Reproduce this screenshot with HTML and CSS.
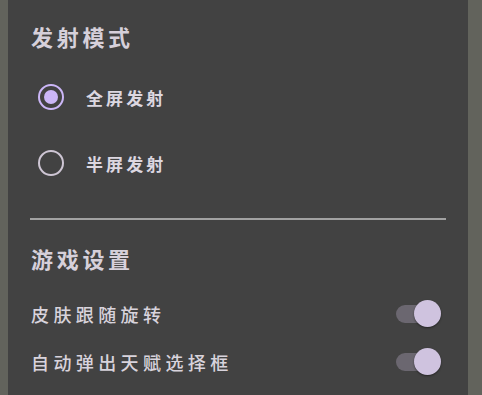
FILE: index.html
```html
<!DOCTYPE html>
<html lang="zh-CN">
<head>
<meta charset="utf-8">
<title>设置</title>
<link rel="stylesheet" href="styles.css">
</head>
<body>
<div class="screen">
  <div class="edge edge-left"></div>
  <div class="panel">
    <div class="section-title">发射模式</div>
    <div class="radio-row">
      <span class="radio radio-on"><span class="radio-dot"></span></span>
      <span class="radio-label">全屏发射</span>
    </div>
    <div class="radio-row">
      <span class="radio"></span>
      <span class="radio-label">半屏发射</span>
    </div>
    <div class="divider"></div>
    <div class="section-title section-title-2">游戏设置</div>
    <div class="switch-row switch-row-first">
      <span class="switch-label">皮肤跟随旋转</span>
      <span class="switch"><span class="track"></span><span class="thumb"></span></span>
    </div>
    <div class="switch-row">
      <span class="switch-label">自动弹出天赋选择框</span>
      <span class="switch"><span class="track"></span><span class="thumb"></span></span>
    </div>
  </div>
  <div class="edge edge-right"></div>
</div>
</body>
</html>
```
FILE: styles.css
```css
html, body {
  margin: 0;
  padding: 0;
  background: #62635c;
}
.screen {
  display: flex;
  width: 482px;
  height: 395px;
  overflow: hidden;
  font-family: "Noto Sans CJK SC", "Noto Sans", sans-serif;
}
.edge {
  background: #62635c;
  flex: none;
}
.edge-left { width: 8px; }
.edge-right { width: 14px; }
.panel {
  flex: 1;
  background: #424242;
  padding: 21px 22px 0 22px;
  box-sizing: border-box;
  display: flex;
  flex-direction: column;
}
.section-title {
  height: 30px;
  line-height: 30px;
  font-size: 22px;
  font-weight: 700;
  letter-spacing: 3.7px;
  color: #d6d0da;
  padding-left: 1px;
}
.radio-row {
  height: 66px;
  display: flex;
  align-items: center;
  padding-left: 8px;
}
.section-title + .radio-row { margin-top: 13px; }
.radio {
  width: 26px;
  height: 26px;
  box-sizing: border-box;
  border: 2.5px solid #cec6d4;
  border-radius: 50%;
  display: flex;
  align-items: center;
  justify-content: center;
  flex: none;
}
.radio-on { border-color: #cbb6f7; }
.radio-dot {
  width: 14px;
  height: 14px;
  border-radius: 50%;
  background: #cbb6f7;
}
.radio-label {
  margin-left: 22px;
  font-size: 17px;
  font-weight: 700;
  letter-spacing: 3.1px;
  color: #dcd7e0;
}
.divider {
  margin-top: 22px;
  height: 2px;
  background: #a2a2a2;
}
.section-title-2 { margin-top: 23px; }
.switch-row {
  height: 48px;
  display: flex;
  align-items: center;
  justify-content: space-between;
}
.switch-row-first { margin-top: 17px; }
.switch-label {
  font-size: 18px;
  font-weight: 500;
  letter-spacing: 4.4px;
  color: #d8d3dc;
  padding-left: 1px;
}
.switch {
  position: relative;
  width: 45px;
  height: 28px;
  margin-right: 5px;
  flex: none;
}
.track {
  position: absolute;
  left: 0;
  top: 5px;
  width: 42px;
  height: 18px;
  border-radius: 9px;
  background: #6b6770;
}
.thumb {
  position: absolute;
  right: 0;
  top: 0;
  width: 27px;
  height: 27px;
  border-radius: 50%;
  background: #cfc3df;
  box-shadow: 0 1px 2px rgba(0, 0, 0, 0.45);
}
```
